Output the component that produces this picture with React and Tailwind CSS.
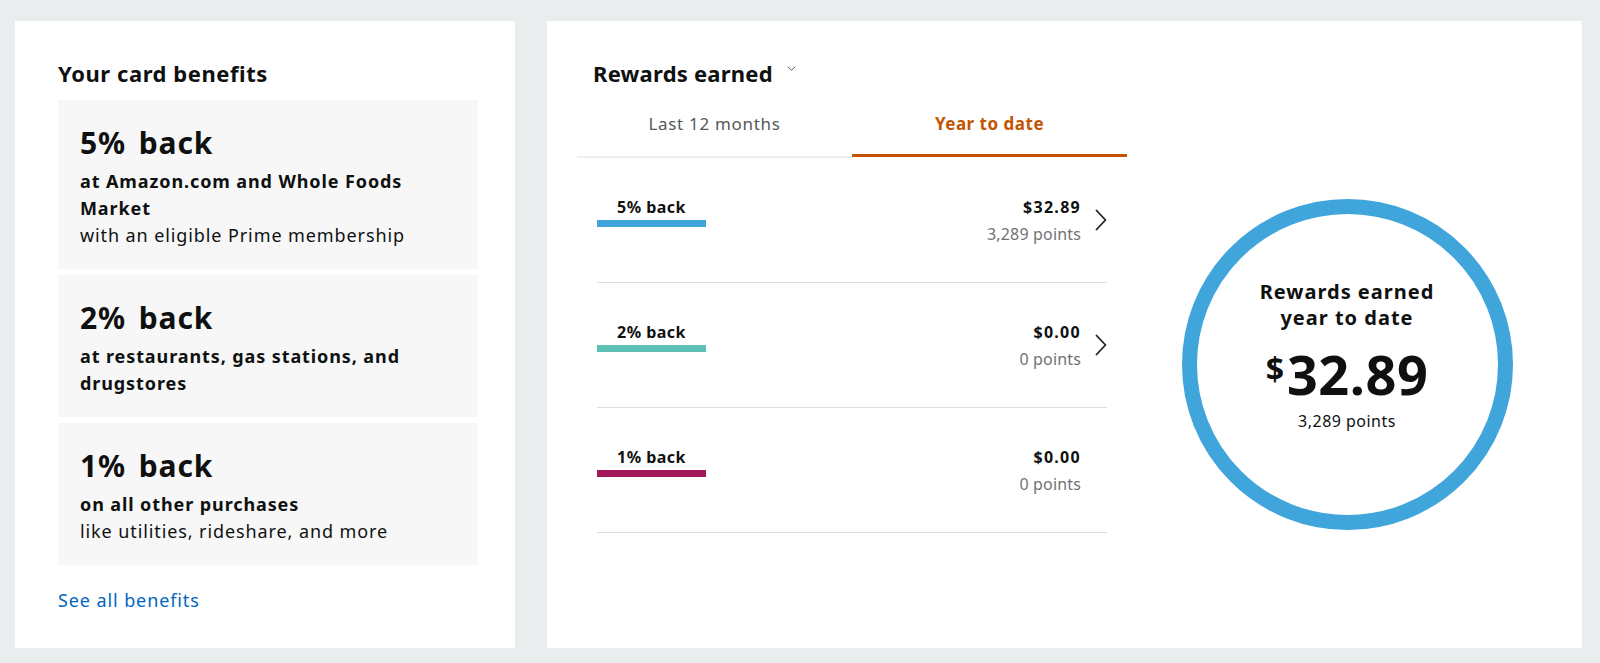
import React from "react";

const benefits = [
  { pct: "5% back", bold: ["at Amazon.com and Whole Foods", "Market"], reg: "with an eligible Prime membership" },
  { pct: "2% back", bold: ["at restaurants, gas stations, and", "drugstores"], reg: null },
  { pct: "1% back", bold: ["on all other purchases"], reg: "like utilities, rideshare, and more" },
];

const rows = [
  { label: "5% back", color: "bg-[#3fa5db]", amount: "$32.89", points: "3,289 points", chevron: true },
  { label: "2% back", color: "bg-[#5ec1b5]", amount: "$0.00", points: "0 points", chevron: true },
  { label: "1% back", color: "bg-[#a2195b]", amount: "$0.00", points: "0 points", chevron: false },
];

function ChevronRight() {
  return (
    <svg width="12" height="22" viewBox="0 0 12 22" fill="none">
      <path d="M1.5 1.5 L10.5 11 L1.5 20.5" stroke="#222" strokeWidth="1.8" strokeLinecap="round" strokeLinejoin="round" />
    </svg>
  );
}

export default function App() {
  return (
    <div
      className="w-[1600px] h-[663px] bg-[#eaeded] flex pt-[21px] pb-[15px] pl-[15px] gap-[32px] text-[#0f1111]"
      style={{ fontFamily: '"Noto Sans", "Open Sans", Arial, sans-serif' }}
    >
      {/* Left card */}
      <div className="w-[500px] h-[627px] bg-white pt-[38px] pl-[43px]">
        <h2 className="text-[22px] leading-[28px] font-bold tracking-[0.025em]">Your card benefits</h2>
        <div className="mt-[13px] flex flex-col gap-[6px] w-[420px]">
          {benefits.map((b) => (
            <div key={b.pct} className="bg-[#f7f7f7] pt-[23px] pb-[20px] px-[22px]">
              <div className="text-[30px] leading-[40px] font-bold tracking-[0.03em] [word-spacing:4px]">{b.pct}</div>
              <div className="mt-[5px] text-[18px] leading-[27px] tracking-[0.05em]">
                {b.bold.map((l) => (
                  <div key={l} className="font-bold">{l}</div>
                ))}
                {b.reg && <div>{b.reg}</div>}
              </div>
            </div>
          ))}
        </div>
        <a className="block mt-[22px] text-[18px] leading-[27px] tracking-[0.05em] text-[#0066c0]">See all benefits</a>
      </div>

      {/* Right card */}
      <div className="w-[1035px] h-[627px] bg-white pt-[38px] pl-[30px] flex">
        <div className="w-[550px]">
          <div className="pl-[16px] flex items-center">
            <h2 className="text-[22px] leading-[28px] font-bold tracking-[0.01em]">Rewards earned</h2>
            <svg className="ml-[14px] -mt-[10px]" width="9" height="5" viewBox="0 0 9 5" fill="none">
              <path d="M0.8 0.8 L4.5 4.2 L8.2 0.8" stroke="#555" strokeWidth="1" />
            </svg>
          </div>
          <div className="mt-[25px] flex items-start">
            <div className="w-1/2 text-center text-[17px] leading-[24px] tracking-[0.04em] text-[#565959] pb-[20px] border-b-2 border-[#eeeeee]">
              Last 12 months
            </div>
            <div className="w-1/2 text-center text-[17px] leading-[24px] tracking-[0.03em] font-bold text-[#c45500] pb-[18px] border-b-[3px] border-[#c45500]">
              Year to date
            </div>
          </div>
          <div className="px-[20px]">
            {rows.map((r) => (
              <div key={r.label} className="h-[125px] border-b border-[#dddddd] flex items-center">
                <div className="w-[109px] flex flex-col items-center mb-[16px]">
                  <div className="text-[16px] leading-[20px] font-bold tracking-[0.03em]">{r.label}</div>
                  <div className={`mt-[3px] w-full h-[7px] ${r.color}`} />
                </div>
                <div className="flex-1" />
                <div className="text-right text-[16px] leading-[24px]">
                  <div className="font-bold tracking-[0.08em]">{r.amount}</div>
                  <div className="mt-[3px] text-[#6f7373] tracking-[0.01em]">{r.points}</div>
                </div>
                <div className="ml-[14px] w-[12px] h-[22px]">{r.chevron && <ChevronRight />}</div>
              </div>
            ))}
          </div>
        </div>
        <div className="flex-1 pr-[15px] flex justify-center pt-[140px]">
          <div className="w-[331px] h-[331px] rounded-full border-[15px] border-[#3fa5db] flex flex-col items-center justify-center pb-[18px] text-center">
            <div className="text-[20px] leading-[26px] font-bold tracking-[0.05em]">
              Rewards earned
              <br />
              year to date
            </div>
            <div className="mt-[12px] flex items-start">
              <span className="text-[32px] leading-[32px] font-bold mt-[10px] mr-[3px]">$</span>
              <span className="text-[54px] leading-[62px] font-bold tracking-[0.01em]">32.89</span>
            </div>
            <div className="mt-[4px] text-[16px] leading-[24px] tracking-[0.03em]">3,289 points</div>
          </div>
        </div>
      </div>
    </div>
  );
}
